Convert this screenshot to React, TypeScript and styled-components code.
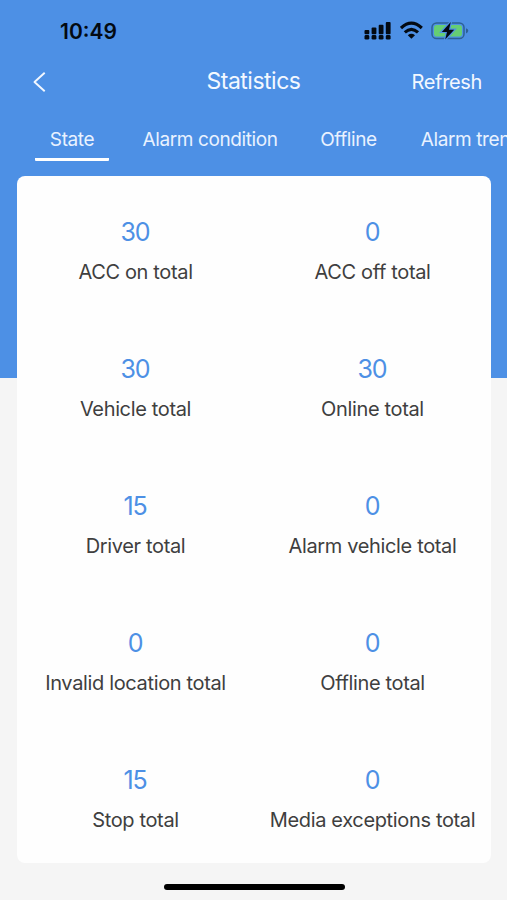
import React from 'react';
import styled, { createGlobalStyle } from 'styled-components';

const GlobalStyle = createGlobalStyle`
  * { box-sizing: border-box; }
  body { margin: 0; overflow: hidden; background: #f5f5f5; }
`;

const Screen = styled.div`
  width: 507px;
  height: 900px;
  overflow: hidden;
  display: flex;
  flex-direction: column;
  background: linear-gradient(#4d90e5 0 378px, #f5f5f5 378px);
  font-family: Inter, 'Liberation Sans', sans-serif;
`;

const StatusBar = styled.div`
  height: 56px;
  flex: none;
  display: flex;
  justify-content: space-between;
  padding: 20px 38px 0 60px;
`;

const Clock = styled.div`
  font-size: 21px;
  font-weight: 600;
  line-height: 24px;
  letter-spacing: 0;
  color: #030a12;
`;

const StatusIcons = styled.div`
  display: flex;
  align-items: flex-start;
`;

const NavBar = styled.div`
  height: 52px;
  flex: none;
  display: grid;
  grid-template-columns: 1fr auto 1fr;
  align-items: center;
  padding: 0 25px;
  color: #f3f8ff;
`;

const BackButton = styled.button`
  display: flex;
  width: 16px;
  margin-left: 7px;
  padding: 0;
  border: 0;
  background: none;
`;

const Title = styled.h1`
  margin: 0 0 1px;
  font-size: 23px;
  font-weight: 400;
  line-height: 27px;
  letter-spacing: -0.5px;
`;

const RefreshButton = styled.button`
  justify-self: end;
  padding: 0;
  border: 0;
  background: none;
  color: inherit;
  font: 400 20px/26px Inter, 'Liberation Sans', sans-serif;
  letter-spacing: -0.35px;
`;

const Tabs = styled.nav`
  height: 68px;
  flex: none;
  display: flex;
  gap: 34px;
  padding: 18px 0 0 35px;
  white-space: nowrap;
`;

const Tab = styled.div<{ $width: number; $active?: boolean }>`
  flex: none;
  display: flex;
  justify-content: center;
  width: ${(p) => p.$width}px;
  height: 35px;
  border-bottom: 3px solid ${(p) => (p.$active ? '#fff' : 'transparent')};
  border-radius: 1px;
  font-size: 19px;
  line-height: 27px;
  letter-spacing: -0.4px;
  color: #e9f2ff;
`;

const Card = styled.main`
  flex: none;
  width: 474px;
  height: 687px;
  margin-left: 17px;
  padding-top: 41px;
  display: grid;
  grid-template-columns: repeat(2, 237px);
  grid-auto-rows: 137px;
  align-content: start;
  border-radius: 8px;
  background: #fefefe;
`;

const Stat = styled.div`
  display: flex;
  flex-direction: column;
  align-items: center;
  white-space: nowrap;
`;

const Value = styled.div`
  font-size: 25px;
  line-height: 30px;
  letter-spacing: -1.2px;
  padding-right: 1px;
  color: #4d90e5;
`;

const Label = styled.div`
  margin-top: 12px;
  font-size: 20px;
  line-height: 26px;
  letter-spacing: -0.35px;
  color: #3f3f3f;
`;

const HomeIndicator = styled.div`
  flex: none;
  width: 181px;
  height: 6px;
  margin: 21px 0 0 164px;
  border-radius: 3px;
  background: #000;
`;

const tabs = [
  { name: 'State', width: 74 },
  { name: 'Alarm condition', width: 134 },
  { name: 'Offline', width: 75 },
  { name: 'Alarm trend', width: 102 },
];

const stats: [number, string][] = [
  [30, 'ACC on total'],
  [0, 'ACC off total'],
  [30, 'Vehicle total'],
  [30, 'Online total'],
  [15, 'Driver total'],
  [0, 'Alarm vehicle total'],
  [0, 'Invalid location total'],
  [0, 'Offline total'],
  [15, 'Stop total'],
  [0, 'Media exceptions total'],
];

const SignalIcon = () => (
  <svg width="36" height="22" viewBox="0 0 36 22" fill="#030a12">
    <rect x="0.5" y="10" width="4.8" height="4.2" rx="1" />
    <rect x="7.6" y="7.5" width="4.8" height="6.7" rx="1" />
    <rect x="14.7" y="4.7" width="4.8" height="9.5" rx="1" />
    <rect x="21.8" y="2" width="4.8" height="12.2" rx="1" />
    <rect x="0.5" y="15.1" width="4.8" height="4.5" rx="1.4" />
    <rect x="7.6" y="15.1" width="4.8" height="4.5" rx="1.4" />
    <rect x="14.7" y="15.1" width="4.8" height="4.5" rx="1.4" />
    <rect x="21.8" y="15.1" width="4.8" height="4.5" rx="1.4" />
  </svg>
);

const WifiIcon = () => (
  <svg width="31" height="22" viewBox="0 0 31 22" fill="none" stroke="#030a12" strokeWidth="3.1">
    <path d="M1 8 Q11.4 -1.8 21.8 8" />
    <path d="M4.8 12.4 Q11.4 6.2 18 12.4" />
    <path d="M7.8 15.2 Q11.4 12.4 15 15.2 L11.4 18.8 Z" fill="#030a12" stroke="none" />
  </svg>
);

const BatteryIcon = () => (
  <svg width="38" height="22" viewBox="0 0 38 22">
    <rect x="1" y="3" width="32" height="15.6" rx="4.6" fill="none" stroke="#2d6095" strokeWidth="1.5" />
    <rect x="3" y="5" width="28" height="11.6" rx="2.8" fill="#65ce74" />
    <path d="M35 8.2 Q37.3 9 37.3 10.8 Q37.3 12.6 35 13.4 Z" fill="#2d6095" />
    <path
      d="M19.8 2 L10.8 11.9 H16 L14.2 19.6 L23.2 9.7 H18 Z"
      fill="#030a12"
      stroke="#4d90e5"
      strokeWidth="2.4"
      paintOrder="stroke"
    />
  </svg>
);

export default function App() {
  return (
    <>
      <GlobalStyle />
      <Screen>
        <StatusBar>
          <Clock>10:49</Clock>
          <StatusIcons>
            <SignalIcon />
            <WifiIcon />
            <BatteryIcon />
          </StatusIcons>
        </StatusBar>
        <NavBar>
          <BackButton aria-label="Back">
            <svg width="16" height="22" viewBox="0 0 16 22" fill="none" stroke="#f3f8ff" strokeWidth="1.9">
              <path d="M12.7 1.8 L2.5 11 L12.7 20.2" strokeLinejoin="round" />
            </svg>
          </BackButton>
          <Title>Statistics</Title>
          <RefreshButton>Refresh</RefreshButton>
        </NavBar>
        <Tabs>
          {tabs.map((tab, i) => (
            <Tab key={tab.name} $width={tab.width} $active={i === 0}>
              {tab.name}
            </Tab>
          ))}
        </Tabs>
        <Card>
          {stats.map(([value, label]) => (
            <Stat key={label}>
              <Value>{value}</Value>
              <Label>{label}</Label>
            </Stat>
          ))}
        </Card>
        <HomeIndicator />
      </Screen>
    </>
  );
}
